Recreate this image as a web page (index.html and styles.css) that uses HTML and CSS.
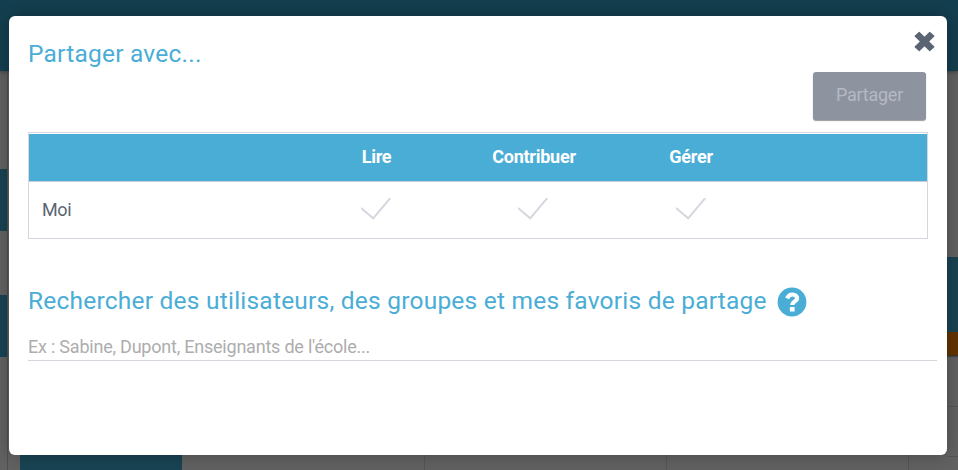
FILE: index.html
```html
<!DOCTYPE html>
<html lang="fr">
<head>
<meta charset="utf-8">
<title>Partager avec...</title>
<link rel="stylesheet" href="styles.css">
</head>
<body>
<div class="page">
  <div class="topbar"></div>
  <div class="content">
    <div class="rail"><span class="rail-item"></span><span class="rail-item"></span></div>
    <div class="workspace">
      <div class="bottom-row"><span class="tile"></span><span class="cell first"></span><span class="cell"></span><span class="cell"></span><span class="cell-end"></span></div>
    </div>
    <div class="side"><span class="side-main"></span><span class="side-accent"></span><span class="side-row"></span><span class="side-row"></span></div>
  </div>
</div>
<section class="modal">
  <header class="modal-head">
    <h2 class="title">Partager avec...</h2>
    <svg class="close" viewBox="0 0 20 20"><path d="M5 1.2 10 6.1 15 1.2 19 5 13.9 10 19 15 15 18.8 10 13.9 5 18.8 1 15 6.1 10 1 5Z" fill="#5b6472" stroke="#5b6472" stroke-width="1" stroke-linejoin="round"/></svg>
  </header>
  <div class="actions"><button class="share" disabled>Partager</button></div>
  <div class="rights">
    <div class="row head"><span></span><span>Lire</span><span>Contribuer</span><span>Gérer</span></div>
    <div class="row line">
      <span class="name">Moi</span>
      <svg class="check" viewBox="0 0 30 22"><path d="M0 10 12.2 20.3 29.3 0"/></svg>
      <svg class="check" viewBox="0 0 30 22"><path d="M0 10 12.2 20.3 29.3 0"/></svg>
      <svg class="check last" viewBox="0 0 30 22"><path d="M0 10 12.2 20.3 29.3 0"/></svg>
    </div>
  </div>
  <div class="search-title">
    <h2 class="title">Rechercher des utilisateurs, des groupes et mes favoris de partage</h2>
    <svg class="help" viewBox="0 0 30 30"><circle cx="15" cy="15" r="14.4" fill="#4aadd6"/><path d="M10.1 11.4C11.3 8.6 13 7.5 15.3 7.5c2.9 0 4.8 1.6 4.8 3.7 0 3.3-4.8 3.1-4.8 6.8" fill="none" stroke="#fff" stroke-width="4.2"/><path d="M12.9 19.9h4.7v4.5h-4.7z" fill="#fff"/></svg>
  </div>
  <input class="search" placeholder="Ex : Sabine, Dupont, Enseignants de l'école...">
</section>
</body>
</html>
```
FILE: styles.css
```css
* { box-sizing: border-box; }
body { margin: 0; height: 470px; overflow: hidden; font-family: Roboto, "Liberation Sans", sans-serif; }
.page { height: 470px; display: flex; flex-direction: column; background: #626262; }
.topbar { height: 71px; flex: none; background: #143f50; box-shadow: 0 1px 4px rgba(0,0,0,.35); }
.content { flex: 1; display: flex; }
.rail { width: 7px; padding-top: 98px; display: flex; flex-direction: column; gap: 64px; }
.rail-item { height: 62px; background: #194454; }
.workspace { flex: 1; display: flex; align-items: flex-end; border-left: 1px solid #505050; padding-left: 12px; }
.bottom-row { height: 20px; flex: 1; display: flex; }
.tile { width: 162px; background: #194454; }
.cell { width: 242px; border-right: 1px solid #565656; }
.cell.first { width: 243px; }
.cell-end { flex: 1; }
.side { width: 11px; padding-top: 186px; display: flex; flex-direction: column; }
.side-main { height: 75px; background: #194454; }
.side-accent { height: 24px; background: #643300; border-bottom: 1px solid #3e3428; box-shadow: 0 1px 1px #484848; }
.side-row { height: 51px; border-bottom: 1px solid #555; }
.side-row:last-child { height: 50px; }
.modal { position: absolute; left: 9px; top: 16px; width: 938px; height: 439px; padding: 15px 10px 0 19px; background: #fff; border-radius: 6px; box-shadow: 0 0 20px rgba(0,0,0,.28); }
.modal-head { height: 41px; display: flex; justify-content: space-between; }
.title { margin: 0; font-size: 24.5px; line-height: 45px; font-weight: 400; letter-spacing: .22px; color: #4aadd6; white-space: nowrap; }
.close { width: 21px; height: 21px; margin: 0 2px; }
.actions { display: flex; justify-content: flex-end; padding-right: 11px; height: 60px; }
.share { width: 113px; height: 48px; padding: 0 0 3px; border: 0; border-radius: 3px; background: #8d939f; color: #b5b9c4; font: 18px Roboto, sans-serif; letter-spacing: -.25px; box-shadow: 0 1px 1px rgba(0,0,0,.4); }
.rights { width: 900px; height: 107px; border: 1px solid #d6d6df; padding-top: 1px; }
.row { display: grid; grid-template-columns: 269px 158px 157px 157px 1fr; align-items: center; }
.head { height: 48px; padding-bottom: 2px; background: #4aadd6; border-bottom: 1px solid #c2cfd8; color: #fff; font-size: 18px; font-weight: 700; letter-spacing: -.25px; text-align: center; }
.head span { padding-right: 1px; }
.line { height: 56px; padding-bottom: 2px; font-size: 18px; letter-spacing: -.4px; color: #5b6472; }
.name { padding-left: 13px; }
.check { width: 30px; height: 22px; justify-self: center; margin-right: 3px; fill: none; stroke: #d6d6df; stroke-width: 2; }
.check.last { margin-right: 1px; }
.search-title { height: 60px; margin-top: 33px; display: flex; align-items: center; gap: 10px; }
.search-title .title { padding-bottom: 4px; }
.help { width: 30px; height: 30px; }
.search { display: block; width: 909px; height: 30px; margin-top: -1px; padding: 2px 0 0; border: 0; border-bottom: 1px solid #d6d6df; outline: 0; font: 18px Roboto, sans-serif; letter-spacing: -.22px; background: transparent; }
.search::placeholder { color: #adadad; opacity: 1; }
```
